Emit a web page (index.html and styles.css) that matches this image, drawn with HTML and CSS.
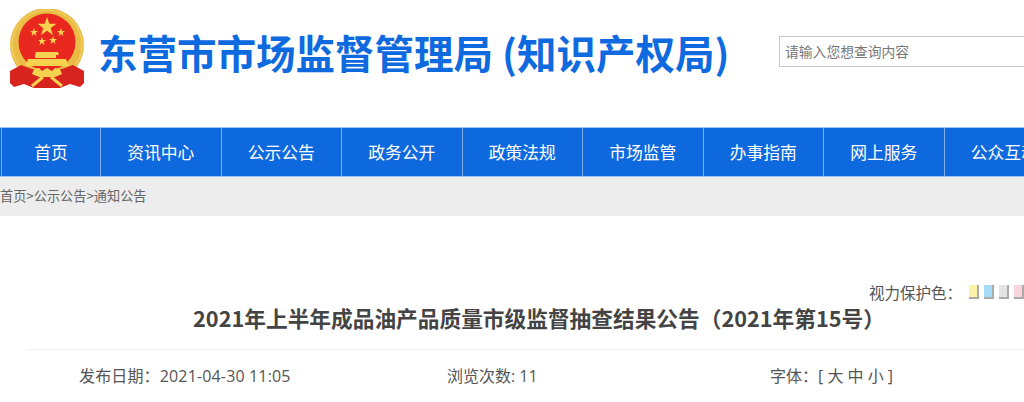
FILE: index.html
```html
<!DOCTYPE html>
<html lang="zh">
<head>
<meta charset="utf-8">
<title>2021年上半年成品油产品质量市级监督抽查结果公告</title>
<link rel="stylesheet" href="styles.css">
</head>
<body>
<header class="top">
  <svg class="emblem" viewBox="0 0 74 80" width="74" height="80" aria-hidden="true">
    <circle cx="37" cy="36" r="37" fill="#e9bd45"/>
    <circle cx="37" cy="36" r="35" fill="none" stroke="#f5d76a" stroke-width="1"/>
    <circle cx="37" cy="33" r="28.500" fill="#e8281f"/>
    <path d="M11 56 L0 62 L0 74 L4 78 L14 75 L24 79 L50 79 L60 75 L70 78 L74 74 L74 62 L63 56 L52 60 H22 Z" fill="#d8241e"/>
    <g fill="#f6d34e">
      <polygon points="37,8 39.300,14.800 46.500,14.800 40.700,19.100 42.900,26 37,21.800 31.100,26 33.300,19.100 27.500,14.800 34.700,14.800"/>
      <polygon points="24,19 25,22 28,22 25.600,23.900 26.500,26.900 24,25.100 21.500,26.900 22.400,23.900 20,22 23,22"/>
      <polygon points="51,19 52,22 55,22 52.600,23.900 53.500,26.900 51,25.100 48.500,26.900 49.400,23.900 47,22 50,22"/>
      <polygon points="32,28 33,31 36,31 33.600,32.900 34.500,35.900 32,34.100 29.500,35.900 30.400,32.900 28,31 31,31"/>
      <polygon points="43,27 44,30 47,30 44.600,31.900 45.500,34.900 43,33.100 40.500,34.900 41.400,31.900 39,30 42,30"/>
      <path d="M26 43 H48 L49 46 H46 V49 H25 V46 H25 Z"/>
      <path d="M18 50 H56 L59 57 H15 Z"/>
      <path d="M24 60 L29 59 L32 62 L37 59 L42 62 L45 59 L50 60 L52 65 L45 68 H29 L22 65 Z"/>
    </g>
    <path d="M22 77 L33 68 M52 77 L41 68" stroke="#f6d34e" stroke-width="3" fill="none"/>
  </svg>
  <h1 class="site-name">东营市市场监督管理局 (知识产权局)</h1>
  <div class="search">请输入您想查询内容</div>
</header>
<nav class="nav">
  <a class="nav-item first">首页</a>
  <a class="nav-item">资讯中心</a>
  <a class="nav-item">公示公告</a>
  <a class="nav-item">政务公开</a>
  <a class="nav-item">政策法规</a>
  <a class="nav-item">市场监管</a>
  <a class="nav-item">办事指南</a>
  <a class="nav-item">网上服务</a>
  <a class="nav-item">公众互动</a>
</nav>
<div class="crumbs">首页&gt;公示公告&gt;通知公告</div>
<main class="article">
  <div class="eye">
    <span>视力保护色：</span>
    <i class="swatch yellow"></i><i class="swatch blue"></i><i class="swatch gray"></i><i class="swatch pink"></i>
  </div>
  <h2 class="title">2021年上半年成品油产品质量市级监督抽查结果公告（2021年第15号）</h2>
  <div class="meta">
    <span class="date">发布日期：2021-04-30 11:05</span>
    <span class="views">浏览次数: 11</span>
    <span class="size">字体：[ 大 中 小 ]</span>
  </div>
</main>
</body>
</html>
```
FILE: styles.css
```css
* { box-sizing: border-box; }
html, body { margin: 0; padding: 0; }
body {
  width: 1024px;
  height: 402px;
  overflow: hidden;
  background: #fff;
  font-family: "Open Sans", "Noto Sans CJK SC", sans-serif;
  color: #444;
}
.top {
  height: 127px;
  display: flex;
  align-items: flex-start;
  padding-left: 10px;
}
.emblem { margin-top: 9px; flex: none; }
.site-name {
  margin: 27px 0 0 14px;
  width: 681px;
  flex: none;
  font-size: 39.500px;
  line-height: 50px;
  font-weight: 700;
  color: #0f6ae0;
  white-space: nowrap;
  font-family: "Noto Sans CJK SC", sans-serif;
}
.search {
  margin: 36px 0 0 0;
  flex: none;
  width: 260px;
  height: 31px;
  border: 1px solid #c8c8c8;
  padding-left: 5px;
  font-size: 13.800px;
  line-height: 28px;
  color: #777;
  font-family: "Noto Sans CJK SC", sans-serif;
}
.nav {
  height: 50px;
  display: flex;
  background: #0f69de;
  border-top: 1px solid #9cc3f3;
  border-bottom: 1px solid #9cc3f3;
  padding-left: 1px;
  overflow: hidden;
}
.nav-item {
  flex: none;
  width: 120.5px;
  border-left: 1px solid #7fb0ee;
  text-align: center;
  color: #fff;
  font-size: 16.800px;
  line-height: 48px;
  font-family: "Noto Sans CJK SC", sans-serif;
}
.nav-item.first { width: 99px; }
.crumbs {
  height: 39px;
  background: #ededed;
  font-size: 13.200px;
  line-height: 38px;
  color: #666;
  font-family: "Noto Sans CJK SC", sans-serif;
}
.article { padding: 66px 0 0 28px; }
.eye {
  height: 20px;
  display: flex;
  align-items: center;
  justify-content: flex-end;
  font-size: 15.500px;
  line-height: 20px;
  color: #555;
  font-family: "Noto Sans CJK SC", sans-serif;
}
.eye span { margin-right: 7px; }
.swatch {
  display: block;
  width: 10px;
  height: 14px;
  margin-right: 5px;
  border-right: 2px solid #aaa;
  border-bottom: 2px solid #aaa;
}
.swatch.pink { margin-right: 0; }
.yellow { background: #fbf4a8; }
.blue { background: #a5dcf5; }
.gray { background: #e4e4e4; }
.pink { background: #f8d4dc; }
.title {
  margin: 1px 0 0 0;
  padding-left: 26px;
  height: 47px;
  text-align: center;
  font-size: 21.700px;
  line-height: 30px;
  font-weight: 700;
  color: #444;
  border-bottom: 1px solid #eee;
  font-family: "Noto Sans CJK SC", sans-serif;
}
.meta {
  display: grid;
  grid-template-columns: 368px 323px auto;
  padding: 15px 0 0 51px;
  font-size: 16px;
  line-height: 22px;
  color: #555;
  white-space: nowrap;
}
.date { letter-spacing: 0.15px; }
```
